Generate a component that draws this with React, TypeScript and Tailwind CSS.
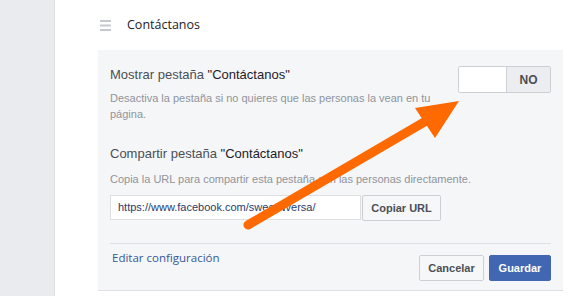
const arial = "font-['Liberation_Sans',Arial,sans-serif]";
const segoe = "font-['Open_Sans','Noto_Sans',sans-serif]";

function Hamburger() {
  return (
    <svg width="11" height="11" viewBox="0 0 11 11" className="mt-[1px]">
      <rect x="0" y="0" width="11" height="2" fill="#c5c8ce" />
      <rect x="0" y="4.5" width="11" height="2" fill="#c5c8ce" />
      <rect x="0" y="9" width="11" height="2" fill="#c5c8ce" />
    </svg>
  );
}

function Arrow() {
  return (
    <svg className="pointer-events-none absolute left-0 top-0" width="573" height="296" viewBox="0 0 573 296">
      <line x1="248" y1="225" x2="426" y2="121" stroke="#ff6a00" strokeWidth="9" strokeLinecap="round" />
      <polygon points="459,101 415,108 435,138" fill="#ff6a00" />
    </svg>
  );
}

export default function App() {
  return (
    <div className={`relative flex h-[296px] w-[573px] overflow-hidden bg-white ${arial}`}>
      <aside className="w-[55px] shrink-0 border-r border-[#dddfe2] bg-[#e9ebee]" />
      <main className="flex flex-1 flex-col pl-[43px] pr-[10px]">
        <header className="flex h-[50px] items-center gap-[16px] pl-[2px]">
          <Hamburger />
          <span className={`${segoe} text-[12.5px] text-[#1d2129]`}>Contáctanos</span>
        </header>

        <section className="flex flex-1 flex-col border-b border-[#dddfe2] bg-[#f5f6f7] px-[12px] pt-[16px]">
          <div className="flex justify-between">
            <div className="w-[330px] shrink-0">
              <h3 className="text-[13px] leading-[18px] text-[#1d2129]">
                <span className="text-[#4b4f56]">Mostrar pestaña</span> "Contáctanos"
              </h3>
              <p className="mt-[6px] text-[11px] leading-[16px] text-[#90949c]">
                Desactiva la pestaña si no quieres que las personas la vean en tu página.
              </p>
            </div>
            <div className="flex h-[27px] w-[93px] overflow-hidden rounded-[2px] border border-[#ccd0d5]">
              <div className="w-[47px] bg-white" />
              <div className="flex flex-1 items-center justify-center border-l border-[#ccd0d5] bg-[#ebedf0] text-[12px] font-bold text-[#4b4f56]">
                NO
              </div>
            </div>
          </div>

          <h3 className="mt-[23px] text-[13px] leading-[18px] text-[#1d2129]">
            <span className="text-[#4b4f56]">Compartir pestaña</span> "Contáctanos"
          </h3>
          <p className="mt-[8px] text-[11px] leading-[16px] text-[#90949c]">
            Copia la URL para compartir esta pestaña con las personas directamente.
          </p>
          <div className="mt-[8px] flex">
            <div className="flex h-[25px] w-[251px] items-center border border-[#dddfe2] bg-white px-[7px] text-[11px] text-[#2b3a68]">
              https://www.facebook.com/sweetNversa/
            </div>
            <button className="ml-[1px] h-[26px] w-[79px] rounded-[2px] border border-[#ccd0d5] bg-[#f6f7f9] text-[11px] font-bold text-[#4b4f56]">
              Copiar URL
            </button>
          </div>

          <div className="mt-[22px] flex items-start justify-between border-t border-[#dddfe2] pt-[6px]">
            <a className={`${segoe} pl-[2px] text-[11.5px] leading-[16px] text-[#365899]`}>Editar configuración</a>
            <div className="mt-[5px] flex gap-[5px]">
              <button className="h-[26px] w-[65px] rounded-[2px] border border-[#ccd0d5] bg-[#f6f7f9] text-[11px] font-bold text-[#4b4f56]">
                Cancelar
              </button>
              <button className="h-[26px] w-[62px] rounded-[2px] border border-[#4267b2] bg-[#4267b2] text-[11px] font-bold text-white">
                Guardar
              </button>
            </div>
          </div>
        </section>
        <div className="h-[5px]" />
      </main>
      <Arrow />
    </div>
  );
}
